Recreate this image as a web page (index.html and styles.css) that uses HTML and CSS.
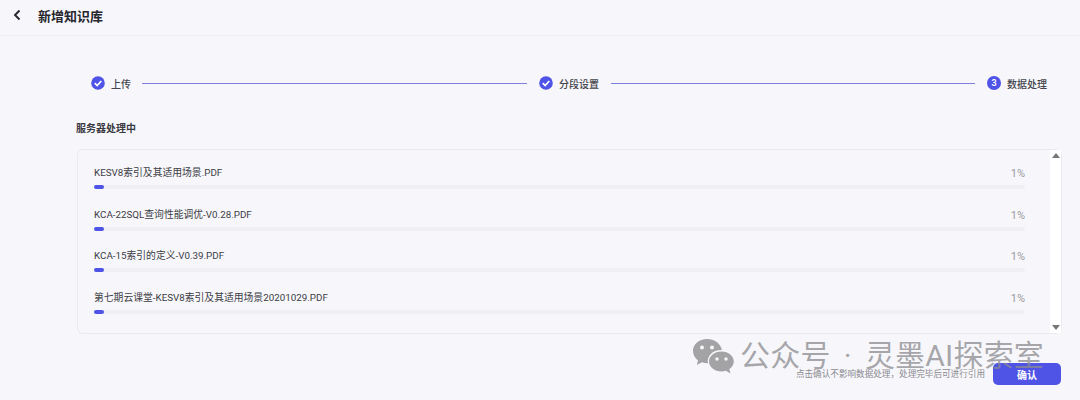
FILE: index.html
```html
<html>
<head>
   <meta charset="utf-8">
   <link rel="stylesheet" href="styles.css">
</head>
<body>
<div class="topbar">
   <svg class="back" width="10" height="12" viewBox="0 0 10 12"><path d="M7.5 1.5 L3 6 L7.5 10.5" fill="none" stroke="#26262e" stroke-width="1.9"/></svg>
   <span class="title">新增知识库</span>
</div>

<div class="content">
   <div class="steps">
      <svg class="step-icon" viewBox="0 0 14 14"><circle cx="7" cy="7" r="6.8" fill="#4f53e6"/><path d="M3.8 7.2 L6.2 9.5 L10.3 5" fill="none" stroke="#fff" stroke-width="1.7"/></svg>
      <span class="step-label">上传</span>
      <div class="step-line line-one"></div>
      <svg class="step-icon" viewBox="0 0 14 14"><circle cx="7" cy="7" r="6.8" fill="#4f53e6"/><path d="M3.8 7.2 L6.2 9.5 L10.3 5" fill="none" stroke="#fff" stroke-width="1.7"/></svg>
      <span class="step-label">分段设置</span>
      <div class="step-line line-two"></div>
      <span class="step-num">3</span>
      <span class="step-label">数据处理</span>
   </div>

   <div class="section-title">服务器处理中</div>

   <div class="filebox">
      <div class="files">
         <div class="file">
            <div class="file-name">KESV8索引及其适用场景.PDF</div>
            <div class="file-pct">1%</div>
            <div class="track"><div class="fill"></div></div>
         </div>
         <div class="file">
            <div class="file-name">KCA-22SQL查询性能调优-V0.28.PDF</div>
            <div class="file-pct">1%</div>
            <div class="track"><div class="fill"></div></div>
         </div>
         <div class="file">
            <div class="file-name">KCA-15索引的定义-V0.39.PDF</div>
            <div class="file-pct">1%</div>
            <div class="track"><div class="fill"></div></div>
         </div>
         <div class="file">
            <div class="file-name">第七期云课堂-KESV8索引及其适用场景20201029.PDF</div>
            <div class="file-pct">1%</div>
            <div class="track"><div class="fill"></div></div>
         </div>
      </div>
      <div class="scrollbar">
         <span class="arrow-up"></span>
         <span class="arrow-down"></span>
      </div>
   </div>

   <div class="actions">
      <span class="hint">点击确认不影响数据处理，处理完毕后可进行引用</span>
      <button class="btn">确认</button>
   </div>
</div>

<div class="watermark">
   <svg width="42" height="36" viewBox="0 0 42 36"><path d="M15 1 C7 1 1 6.300 1 13 C1 17 3 20 6 22.500 L4.800 27 L10 24.300 C12 25 14 25.300 16 25.200 C14.500 18 21 11.500 30 12 C28.500 5.500 22.500 1 15 1 Z" fill="#a3a3a6"/><path d="M29.500 13.500 C22.500 13.500 17 18 17 23.500 C17 29 22.500 33.500 29.500 33.500 C31 33.500 32.500 33.300 34 32.800 L38.500 35.500 L37.400 31 C40 29 41.800 26.500 41.800 23.500 C41.800 18 36.500 13.500 29.500 13.500 Z" fill="#a3a3a6"/><circle cx="10" cy="9.500" r="2" fill="#f7f7fb"/><circle cx="20" cy="9.500" r="2" fill="#f7f7fb"/><circle cx="25" cy="21" r="1.700" fill="#f7f7fb"/><circle cx="34" cy="21" r="1.700" fill="#f7f7fb"/></svg>
   <span class="wm-text">公众号 · 灵墨AI探索室</span>
</div>
</body>
</html>
```

FILE: styles.css
```css
* {
   box-sizing: border-box;
}

body {
   margin: 0;
   width: 1080px;
   height: 400px;
   overflow: hidden;
   position: relative;
   background: #f7f7fb;
   color: #33333a;
   font-family: Roboto, "Noto Sans CJK SC", sans-serif;
   font-size: 10px;
}

.topbar {
   height: 36px;
   display: flex;
   align-items: center;
   padding-left: 12px;
   padding-bottom: 5px;
   border-bottom: 1px solid #f0f0f3;
}

.back {
   margin-right: 16px;
}

.title {
   font-size: 13px;
   font-weight: 700;
   color: #26262e;
}

.content {
   padding: 0 19px 0 76px;
}

.steps {
   height: 22px;
   margin-top: 36px;
   padding-left: 15px;
   display: flex;
   align-items: center;
}

.step-icon {
   width: 14px;
   height: 14px;
   flex: none;
}

.step-label {
   margin-left: 6px;
   font-weight: 500;
   color: #44444c;
   white-space: nowrap;
}

.step-line {
   height: 1px;
   margin-top: 1px;
   background: #7c80e0;
}

.line-one {
   width: 385px;
   margin-left: 11px;
   margin-right: 12px;
}

.line-two {
   width: 364px;
   margin-left: 12px;
   margin-right: 12px;
}

.step-num {
   width: 14px;
   height: 14px;
   flex: none;
   border-radius: 50%;
   background: #4f53e6;
   color: #fff;
   font-size: 9px;
   font-weight: 600;
   line-height: 14px;
   text-align: center;
}

.section-title {
   margin-top: 28px;
   line-height: 14px;
   font-weight: 700;
   color: #3a3a42;
}

.filebox {
   margin-top: 13px;
   margin-left: 1px;
   width: 985px;
   height: 185px;
   display: flex;
   border: 1px solid #ebebef;
   border-radius: 6px;
}

.files {
   flex: 1;
   padding: 12px 25px 0 16px;
}

.file {
   height: 41.5px;
   display: grid;
   grid-template-columns: 1fr auto;
   align-content: start;
}

.file-name {
   font-size: 9.8px;
   line-height: 22px;
   color: #3c3c44;
}

.file-pct {
   line-height: 23px;
   font-size: 11px;
   color: #9a9a9f;
}

.track {
   grid-column: 1 / 3;
   height: 4px;
   border-radius: 2px;
   background: #f0f0f3;
}

.fill {
   width: 10px;
   height: 4px;
   border-radius: 2px;
   background: #4f53e6;
}

.scrollbar {
   width: 11px;
   display: flex;
   flex-direction: column;
   justify-content: space-between;
   align-items: center;
   padding: 3px 0;
   background: #fff;
}

.arrow-up {
   border-left: 4px solid transparent;
   border-right: 4px solid transparent;
   border-bottom: 5px solid #77777a;
}

.arrow-down {
   border-left: 4px solid transparent;
   border-right: 4px solid transparent;
   border-top: 5px solid #77777a;
}

.actions {
   height: 22px;
   margin-top: 29px;
   display: flex;
   justify-content: flex-end;
   align-items: center;
   gap: 8px;
}

.hint {
   padding-bottom: 2px;
   font-size: 8.6px;
   color: #8a8a90;
}

.btn {
   width: 68px;
   height: 22px;
   border: none;
   border-radius: 5px;
   background: #4f53e6;
   color: #fff;
   font-family: inherit;
   font-size: 10px;
   font-weight: 700;
}

/* sits over the page, like the real one */
.watermark {
   position: absolute;
   left: 692px;
   top: 338px;
   display: flex;
   align-items: center;
   gap: 6px;
   pointer-events: none;
}

.wm-text {
   font-size: 30px;
   line-height: 36px;
   letter-spacing: 0.2px;
   word-spacing: 5.500px;
   color: rgba(140, 140, 144, 0.75);
   white-space: nowrap;
}
```
